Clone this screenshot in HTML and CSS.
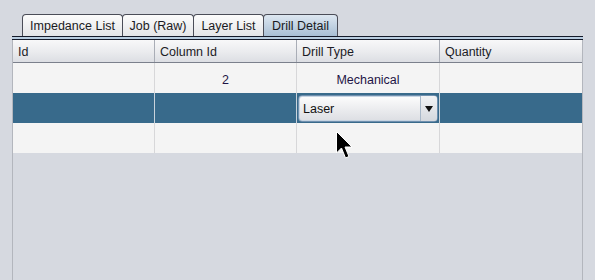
FILE: index.html
```html
<!DOCTYPE html>
<html>
<head>
<meta charset="utf-8">
<link rel="stylesheet" href="styles.css">
</head>
<body>
<div class="pane">
  <div class="tabs">
    <div class="tab t1">Impedance List</div>
    <div class="tab t2">Job (Raw)</div>
    <div class="tab t3">Layer List</div>
    <div class="tab t4 active">Drill Detail</div>
  </div>
  <div class="rule"></div>
  <div class="table">
    <div class="row head">
      <div class="cell">Id</div>
      <div class="cell">Column Id</div>
      <div class="cell">Drill Type</div>
      <div class="cell">Quantity</div>
    </div>
    <div class="row">
      <div class="cell"></div>
      <div class="cell center">2</div>
      <div class="cell center">Mechanical</div>
      <div class="cell"></div>
    </div>
    <div class="row sel">
      <div class="cell"></div>
      <div class="cell"></div>
      <div class="cell editor">
        <div class="combo">
          <span class="combo-text">Laser</span>
          <span class="combo-btn"><svg width="8" height="6" viewBox="0 0 8 6"><polygon points="0,0 8,0 4,6" fill="#111"/></svg></span>
        </div>
      </div>
      <div class="cell"></div>
    </div>
    <div class="row">
      <div class="cell"></div>
      <div class="cell"></div>
      <div class="cell"></div>
      <div class="cell"></div>
    </div>
  </div>
</div>
<svg class="cursor" width="20" height="30" viewBox="0 0 20 30">
  <polygon points="0.5,0.5 0.5,22 5.5,17 9.5,27 13,25.5 9,16 16,16" fill="#000" stroke="#fff" stroke-width="1"/>
</svg>
</body>
</html>
```
FILE: styles.css
```css
html, body {
  margin: 0;
  padding: 0;
  width: 595px;
  height: 280px;
  overflow: hidden;
  background: #d6d9e0;
  font-family: "Liberation Sans", Arial, sans-serif;
  font-size: 12.5px;
}
.pane {
  padding-top: 14px;
  height: 266px;
  display: flex;
  flex-direction: column;
}
.tabs {
  display: flex;
  padding-left: 22px;
  height: 22px;
}
.tab {
  box-sizing: border-box;
  height: 22px;
  border: 1px solid #4b4d58;
  border-bottom: none;
  border-radius: 4px 4px 0 0;
  background: linear-gradient(#fcfcfc, #e4e5e8);
  color: #1a1a22;
  display: flex;
  align-items: center;
  justify-content: center;
  padding-top: 1px;
}
.tab + .tab { margin-left: -1px; }
.t1 { width: 101px; }
.t2 { width: 72px; }
.t3 { width: 71px; }
.t4 { width: 75px; }
.tab.active {
  background: linear-gradient(#dde7f1, #a9bfd5);
}
.rule {
  margin-left: 12px;
  width: 571px;
  height: 2px;
  border-top: 1px solid #141a2a;
  border-bottom: 1px solid #141a2a;
  background: #b9cde0;
}
.table {
  margin-left: 12px;
  width: 571px;
  box-sizing: border-box;
  flex: 1;
  border-left: 1px solid #b3b6bd;
  border-right: 1px solid #b3b6bd;
}
.row {
  display: grid;
  grid-template-columns: 142px 142px 143px 142px;
  height: 30px;
  background: #f4f4f4;
}
.cell {
  box-sizing: border-box;
  border-right: 1px solid #d7d7d9;
  display: flex;
  align-items: center;
  padding-left: 4px;
  padding-top: 3px;
  color: #1e1446;
}
.cell:last-child { border-right: none; }
.cell.center { justify-content: center; padding-left: 0; }
.row.head {
  height: 23px;
  background: linear-gradient(#f8f8f9 0%, #eaebee 55%, #dcdee3 100%);
  border-bottom: 1px solid #7b808c;
  box-sizing: border-box;
}
.row.head .cell {
  border-right-color: #a9adb6;
  color: #1c1c26;
  padding-left: 5px;
  padding-top: 2px;
}
.row.sel { background: #386a8b; }
.row.sel .cell { border-right-color: #c9d3dc; }
.cell.editor {
  padding: 2px 1px 1px 1px;
  align-items: stretch;
}
.combo {
  flex: 1;
  display: flex;
  box-sizing: border-box;
  border: 1px solid #6f8fae;
  border-radius: 4px;
  background: linear-gradient(#fdfdfd, #e9eaed 60%, #dcdee3);
  box-shadow: inset 0 0 0 1px #c6d4e2;
  overflow: hidden;
}
.combo-text {
  flex: 1;
  display: flex;
  align-items: center;
  padding-left: 4px;
  padding-top: 1px;
  color: #111;
}
.combo-btn {
  width: 16px;
  border-left: 1px solid #a7b7c8;
  display: flex;
  align-items: center;
  justify-content: center;
  background: linear-gradient(#f2f3f5, #d4d8de);
}
.cursor {
  position: absolute;
  left: 336px;
  top: 131px;
}
```
